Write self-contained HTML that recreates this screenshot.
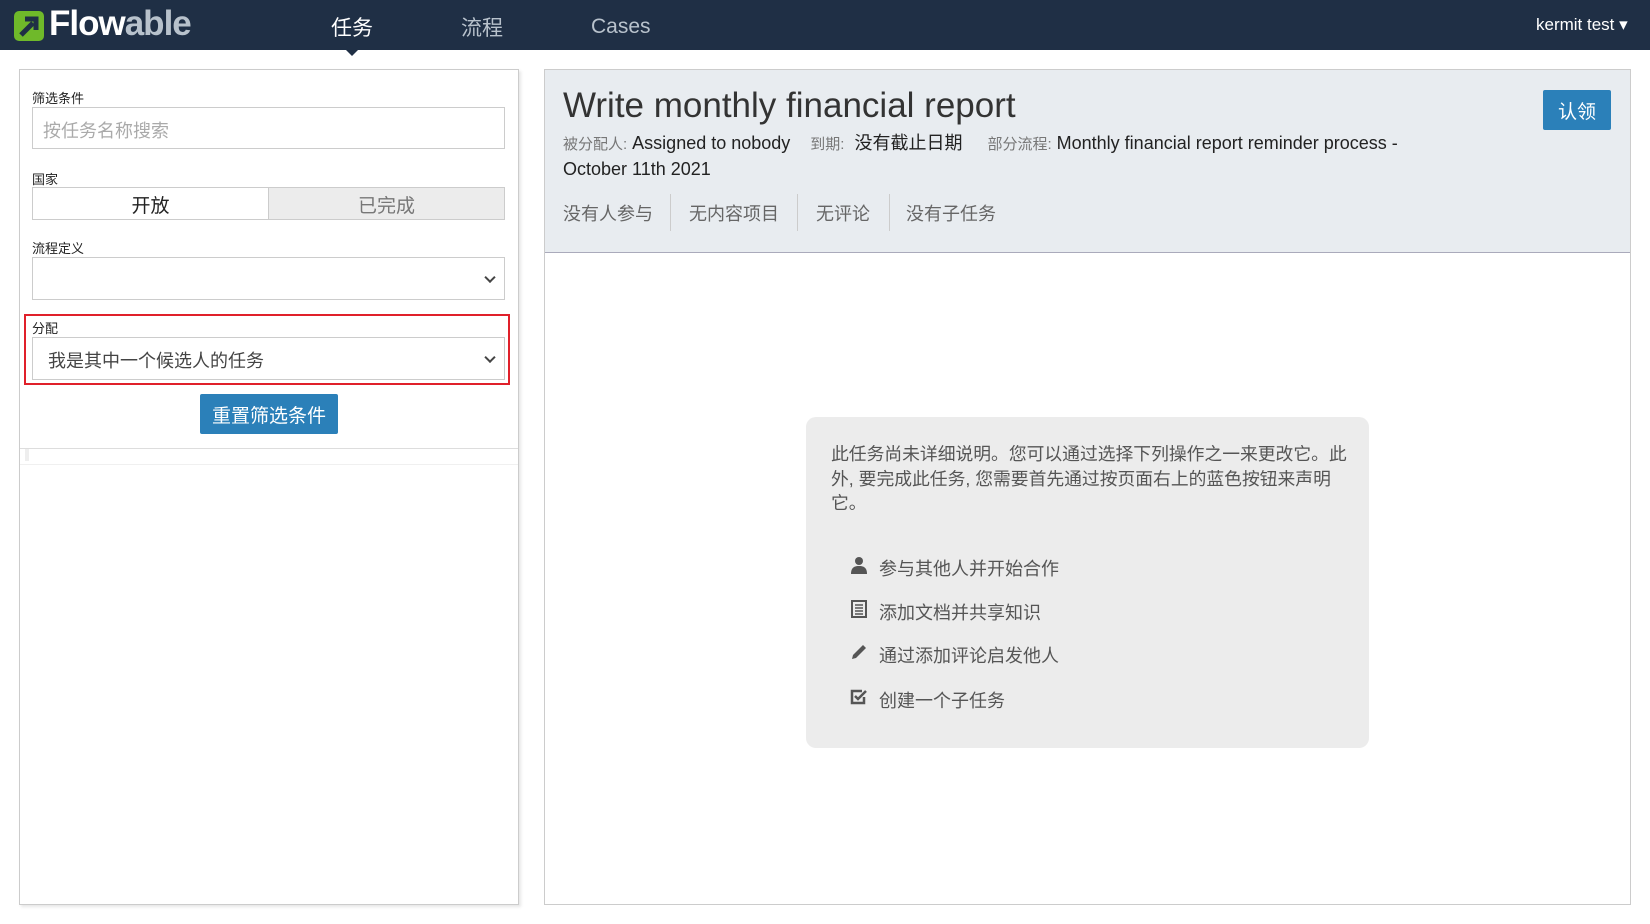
<!DOCTYPE html>
<html><head><meta charset="utf-8"><style>
*{box-sizing:border-box;margin:0;padding:0}
body{width:1650px;height:924px;background:#fff;font-family:"Liberation Sans","Noto Sans CJK SC",sans-serif;position:relative;overflow:hidden;color:#333}
.a{position:absolute}
.nav{left:0;top:0;width:1650px;height:50px;background:#1f2f45}
.nl{font-size:21px;color:#b8c2cc;top:12px}
.lbl{font-size:13px;color:#222}
.box{border:1px solid #ccc;background:#fff}
.chev{position:absolute;right:10px;top:50%;width:8px;height:8px;border-right:2px solid #444;border-bottom:2px solid #444;transform:translateY(-70%) rotate(45deg)}
.meta{font-size:18px;color:#222}
.meta small{font-size:15px;color:#777}
.tab{font-size:18px;color:#666;top:200px}
.sep{top:194px;width:1px;height:37px;background:#ccc}
.it{font-size:18px;color:#555}
</style></head><body>
<div class="a nav"></div>
<svg class="a" style="left:13px;top:10px" width="32" height="32" viewBox="0 0 32 32"><rect x="1" y="1" width="30" height="30" rx="5" fill="#6fb92a"/><path d="M8 25 L20 13 M12 9 H23 V20" stroke="#1f2f45" stroke-width="5" fill="none"/></svg>
<div class="a" style="left:49px;top:4px;font-size:35px;font-weight:bold;color:#fff;letter-spacing:-1px">Flow<span style="color:#b8c2cc">able</span></div>
<div class="a nl" style="left:331px;color:#fff">任务</div>
<div class="a nl" style="left:461px">流程</div>
<div class="a nl" style="left:591px;top:15px">Cases</div>
<div class="a" style="left:345px;top:49px;width:0;height:0;border-left:7px solid transparent;border-right:7px solid transparent;border-top:7px solid #1f2f45"></div>
<div class="a" style="left:1536px;top:15px;font-size:17px;color:#fff">kermit test ▾</div>

<div class="a" style="left:19px;top:69px;width:500px;height:836px;border:1px solid #ccc;box-shadow:2px 2px 3px rgba(0,0,0,.1)"></div>
<div class="a lbl" style="left:32px;top:88px">筛选条件</div>
<div class="a box" style="left:32px;top:107px;width:473px;height:42px;font-size:18px;color:#aaa;padding:9px 10px">按任务名称搜索</div>
<div class="a lbl" style="left:32px;top:169px">国家</div>
<div class="a box" style="left:32px;top:187px;width:237px;height:33px;font-size:19px;text-align:center;padding-top:3px;color:#222">开放</div>
<div class="a box" style="left:268px;top:187px;width:237px;height:33px;font-size:19px;text-align:center;padding-top:3px;color:#777;background:#ececec">已完成</div>
<div class="a lbl" style="left:32px;top:238px">流程定义</div>
<div class="a box" style="left:32px;top:257px;width:473px;height:43px"><i class="chev"></i></div>
<div class="a" style="left:24px;top:314px;width:486px;height:71px;border:2px solid #e0202a"></div>
<div class="a lbl" style="left:32px;top:318px">分配</div>
<div class="a box" style="left:32px;top:337px;width:473px;height:43px;font-size:18px;color:#444;padding:9px 15px">我是其中一个候选人的任务<i class="chev"></i></div>
<div class="a" style="left:200px;top:394px;width:138px;height:40px;background:#2b80b9;border-radius:2px;color:#fff;font-size:19px;text-align:center;padding-top:7px">重置筛选条件</div>
<div class="a" style="left:20px;top:448px;width:498px;height:1px;background:#ddd"></div>
<div class="a" style="left:25px;top:449px;width:4px;height:12px;background:#eee"></div>
<div class="a" style="left:20px;top:464px;width:498px;height:1px;background:#f0f0f0"></div>

<div class="a" style="left:544px;top:69px;width:1087px;height:836px;border:1px solid #ccc"></div>
<div class="a" style="left:545px;top:70px;width:1085px;height:183px;background:#e8ecf0;border-bottom:1px solid #aab"></div>
<div class="a" style="left:563px;top:86px;font-size:35px;color:#333">Write monthly financial report</div>
<div class="a meta" style="left:563px;top:131px;width:885px;line-height:25px"><small>被分配人:</small> Assigned to nobody &nbsp;&nbsp;&nbsp;<small>到期:</small> &nbsp;没有截止日期 &nbsp;&nbsp;&nbsp;&nbsp;<small>部分流程:</small> Monthly financial report reminder process - October 11th 2021</div>
<div class="a" style="left:1543px;top:90px;width:68px;height:40px;background:#2b80b9;border-radius:2px;color:#fff;font-size:19px;text-align:center;padding-top:7px">认领</div>
<div class="a tab" style="left:563px">没有人参与</div>
<div class="a sep" style="left:670px"></div>
<div class="a tab" style="left:689px">无内容项目</div>
<div class="a sep" style="left:797px"></div>
<div class="a tab" style="left:816px">无评论</div>
<div class="a sep" style="left:889px"></div>
<div class="a tab" style="left:906px">没有子任务</div>

<div class="a" style="left:806px;top:417px;width:563px;height:331px;background:#ececec;border-radius:10px"></div>
<div class="a" style="left:831px;top:442px;font-size:17.8px;line-height:24.5px;color:#555;white-space:nowrap">此任务尚未详细说明。您可以通过选择下列操作之一来更改它。此<br>外, 要完成此任务, 您需要首先通过按页面右上的蓝色按钮来声明<br>它。</div>
<svg class="a" style="left:850px;top:556px" width="18" height="18" viewBox="0 0 18 18"><circle cx="9" cy="5" r="4" fill="#555"/><path d="M1 18 C1 11 5 10 9 10 C13 10 17 11 17 18Z" fill="#555"/></svg>
<div class="a it" style="left:879px;top:555px">参与其他人并开始合作</div>
<svg class="a" style="left:851px;top:600px" width="16" height="18" viewBox="0 0 16 18"><rect x="1" y="1" width="14" height="16" fill="none" stroke="#555" stroke-width="2"/><path d="M4 5H12M4 8H12M4 11H12M4 14H12" stroke="#555" stroke-width="1.5"/></svg>
<div class="a it" style="left:879px;top:599px">添加文档并共享知识</div>
<svg class="a" style="left:850px;top:643px" width="18" height="18" viewBox="0 0 18 18"><path d="M2 16 L3 12 L13 2 L16 5 L6 15Z" fill="#555"/></svg>
<div class="a it" style="left:879px;top:642px">通过添加评论启发他人</div>
<svg class="a" style="left:850px;top:688px" width="18" height="18" viewBox="0 0 18 18"><path d="M14 9V15H2V3H12" stroke="#555" stroke-width="2.5" fill="none"/><path d="M5 8L8 11L16 3" stroke="#555" stroke-width="2.5" fill="none"/></svg>
<div class="a it" style="left:879px;top:687px">创建一个子任务</div>
</body></html>
